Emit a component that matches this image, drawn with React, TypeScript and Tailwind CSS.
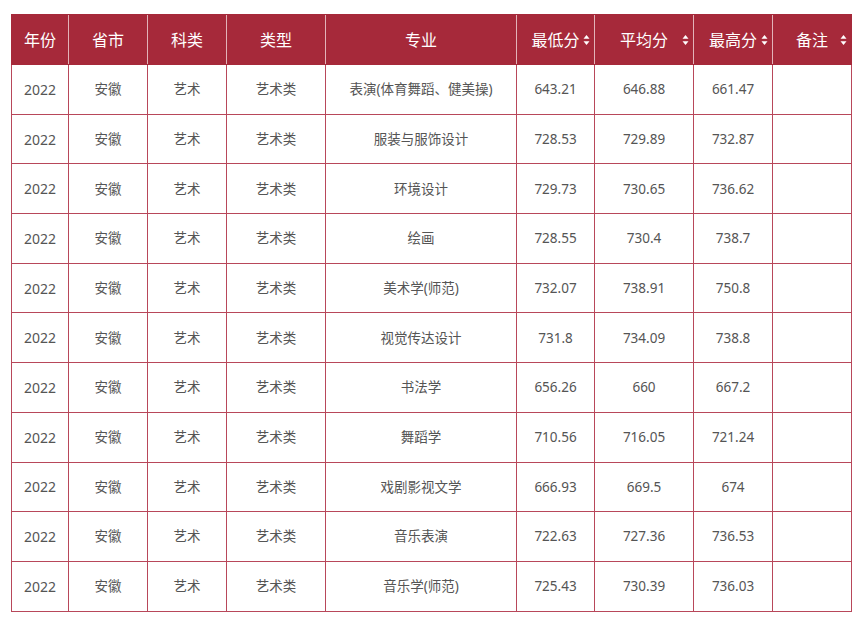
import React from "react";

const rows: [string, string, string, string, string][] = [
  ["表演(体育舞蹈、健美操)", "643.21", "646.88", "661.47", ""],
  ["服装与服饰设计", "728.53", "729.89", "732.87", ""],
  ["环境设计", "729.73", "730.65", "736.62", ""],
  ["绘画", "728.55", "730.4", "738.7", ""],
  ["美术学(师范)", "732.07", "738.91", "750.8", ""],
  ["视觉传达设计", "731.8", "734.09", "738.8", ""],
  ["书法学", "656.26", "660", "667.2", ""],
  ["舞蹈学", "710.56", "716.05", "721.24", ""],
  ["戏剧影视文学", "666.93", "669.5", "674", ""],
  ["音乐表演", "722.63", "727.36", "736.53", ""],
  ["音乐学(师范)", "725.43", "730.39", "736.03", ""],
];

const widths = [57, 79, 79, 99, 191, 78, 99, 79, 79];

function SortIcon() {
  return (
    <svg className="absolute right-[4px] top-1/2 -translate-y-1/2" width="7" height="11" viewBox="0 0 7 11">
      <path d="M3.5 0.5 L6.5 4.2 L0.5 4.2 Z" fill="#fff" />
      <path d="M3.5 10.5 L6.5 6.8 L0.5 6.8 Z" fill="#fff" />
    </svg>
  );
}

export default function App() {
  const headers = ["年份", "省市", "科类", "类型", "专业", "最低分", "平均分", "最高分", "备注"];
  return (
    <div
      className="w-[865px] h-[625px] bg-white pl-[11px] pt-[14px]"
      style={{ fontFamily: '"Noto Sans", "Noto Sans CJK SC", sans-serif' }}
    >
      <table className="border-collapse table-fixed w-[841px] border border-[#b8475a]">
        <colgroup>
          {widths.map((w, i) => (
            <col key={i} style={{ width: w }} />
          ))}
        </colgroup>
        <thead>
          <tr className="bg-[#a6293a] h-[50px]">
            {headers.map((h, i) => (
              <th
                key={h}
                className={`relative p-0 text-center text-white text-[16px] font-normal border-y border-y-[#a6293a] ${
                  i === 0 ? "border-l border-l-[#a6293a]" : "border-l border-l-[#e2b3b9]"
                } ${i === 8 ? "border-r border-r-[#a6293a]" : ""}`}
              >
                {h}
                {i >= 5 && <SortIcon />}
              </th>
            ))}
          </tr>
        </thead>
        <tbody>
          {rows.map((r, i) => (
            <tr key={i} className="h-[49.7px]">
              {["2022", "安徽", "艺术", "艺术类", ...r].map((c, j) => (
                <td
                  key={j}
                  className={`p-0 text-center border border-[#b8475a] text-[#555] ${
                    j === 0 ? "text-[14px]" : "text-[13.5px]"
                  }`}
                >
                  {c}
                </td>
              ))}
            </tr>
          ))}
        </tbody>
      </table>
    </div>
  );
}
